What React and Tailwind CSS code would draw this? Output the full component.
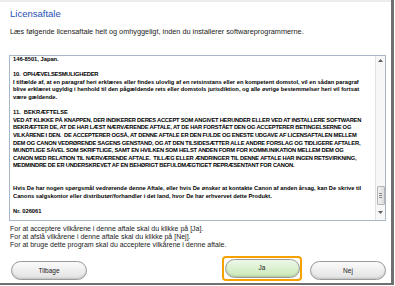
import React from 'react'

const bodyLines = [
  "146-8501, Japan.",
  "",
  "10.  OPHÆVELSESMULIGHEDER",
  "I tilfælde af, at en paragraf heri erklæres eller findes ulovlig af en retsinstans eller en kompetent domstol, vil en sådan paragraf",
  "blive erklæret ugyldig i henhold til den pågældende rets eller domstols jurisdiktion, og alle øvrige bestemmelser heri vil fortsat",
  "være gældende.",
  "",
  "11.  BEKRÆFTELSE",
  "VED AT KLIKKE PÅ KNAPPEN, DER INDIKERER DERES ACCEPT SOM ANGIVET HERUNDER ELLER VED AT INSTALLERE SOFTWAREN",
  "BEKRÆFTER DE, AT DE HAR LÆST NÆRVÆRENDE AFTALE, AT DE HAR FORSTÅET DEN OG ACCEPTERER BETINGELSERNE OG",
  "VILKÅRENE I DEN.  DE ACCEPTERER OGSÅ, AT DENNE AFTALE ER DEN FULDE OG ENESTE UDGAVE AF LICENSAFTALEN MELLEM",
  "DEM OG CANON VEDRØRENDE SAGENS GENSTAND, OG AT DEN TILSIDESÆTTER ALLE ANDRE FORSLAG OG TIDLIGERE AFTALER,",
  "MUNDTLIGE SÅVEL SOM SKRIFTLIGE, SAMT EN HVILKEN SOM HELST ANDEN FORM FOR KOMMUNIKATION MELLEM DEM OG",
  "CANON MED RELATION TIL NÆRVÆRENDE AFTALE.  TILLÆG ELLER ÆNDRINGER TIL DENNE AFTALE HAR INGEN RETSVIRKNING,",
  "MEDMINDRE DE ER UNDERSKREVET AF EN BEHØRIGT BEFULDMÆGTIGET REPRÆSENTANT FOR CANON.",
  "",
  "",
  "Hvis De har nogen spørgsmål vedrørende denne Aftale, eller hvis De ønsker at kontakte Canon af anden årsag, kan De skrive til",
  "Canons salgskontor eller distributør/forhandler i det land, hvor De har erhvervet dette Produkt.",
  "",
  "Nr. 026061",
]

// upper-case lines run a little narrower in the original
const isCaps = (line) => line.length > 20 && line === line.toUpperCase()

const PillButton = ({ label, green }) => (
  <button
    className={
      green
        ? "w-[75px] h-[19px] rounded-full border border-[#9b9b9b] bg-gradient-to-b from-[#eef8e8] to-[#c9e8b6] shadow-[inset_0_-1px_2px_rgba(0,0,0,0.15)] text-[6.5px] text-[#222]"
        : "w-[76px] h-[19px] rounded-full border border-[#9b9b9b] bg-gradient-to-b from-[#fbfbfb] to-[#e2e2e2] shadow-[inset_0_-1px_2px_rgba(0,0,0,0.15)] text-[6.5px] text-[#222]"
    }
  >
    {label}
  </button>
)

const App = () => {
  return (
    <div className="w-[395px] h-[286px] bg-white overflow-hidden" style={{ fontFamily: '"Liberation Sans", Arial, sans-serif' }}>
      <div className="w-[394px] h-[285px] border-r-[3px] border-b-[2px] border-[#707070] flex flex-col">

        {/* top strip */}
        <div className="h-[2px] bg-[#ececec]"></div>

        {/* HEADER */}
        <div className="pl-[10px] pt-[6px]">
          <h1 className="text-[9.5px] leading-[12px] text-[#1f4fb8]">Licensaftale</h1>
          <p className="mt-[7px] text-[7.3px] leading-[10px] text-[#222]">
            Læs følgende licensaftale helt og omhyggeligt, inden du installerer softwareprogrammerne.
          </p>
        </div>

        {/* LICENSE TEXT BOX */}
        <div className="ml-[9px] mt-[18px] w-[377px] h-[166px] border border-[#a7b7c8] flex">
          <div className="flex-1 pl-[3px] pt-0 text-[5.75px] leading-[7.6px] font-bold text-black overflow-hidden">
            {bodyLines.map((line, i) => (
              <div key={i} className={isCaps(line) ? "whitespace-pre h-[7.6px] tracking-[-0.22px]" : "whitespace-pre h-[7.6px]"}>{line}</div>
            ))}
          </div>

          {/* scrollbar */}
          <div className="w-[10px] border-l border-[#e2e2e2] bg-[#f7f7f7] flex flex-col items-center">
            <div className="h-[9px] flex items-center justify-center">
              <svg width="5" height="3" viewBox="0 0 5 3"><path d="M0 3 L2.5 0 L5 3 Z" fill="#606060" /></svg>
            </div>
            <div className="flex-1"></div>
            <div className="w-[8px] h-[19px] border border-[#b5b5b5] rounded-[1px] bg-gradient-to-r from-[#f2f2f2] to-[#dcdcdc] flex flex-col items-center justify-center gap-[1px]">
              <div className="w-[3px] h-px bg-[#888]"></div>
              <div className="w-[3px] h-px bg-[#888]"></div>
              <div className="w-[3px] h-px bg-[#888]"></div>
            </div>
            <div className="h-[15px] flex items-center justify-center">
              <svg width="5" height="3" viewBox="0 0 5 3"><path d="M0 0 L2.5 3 L5 0 Z" fill="#606060" /></svg>
            </div>
          </div>
        </div>

        {/* INSTRUCTIONS */}
        <div className="pl-[10px] mt-[4px] text-[7px] leading-[8px] text-[#222]">
          <p>For at acceptere vilkårene i denne aftale skal du klikke på [Ja].</p>
          <p>For at afslå vilkårene i denne aftale skal du klikke på [Nej].</p>
          <p>For at bruge dette program skal du acceptere vilkårene i denne aftale.</p>
        </div>

        {/* BUTTONS */}
        <div className="mt-[6px] h-[26px] flex items-center">
          <div className="ml-[11px]">
            <PillButton label="Tilbage" />
          </div>
          <div className="ml-[135px] w-[80px] h-[25px] border-2 border-[#f5a200] rounded-[4px] flex items-center justify-center">
            <PillButton label="Ja" green />
          </div>
          <div className="ml-[8px]">
            <PillButton label="Nej" />
          </div>
        </div>

      </div>
    </div>
  )
}

export default App
